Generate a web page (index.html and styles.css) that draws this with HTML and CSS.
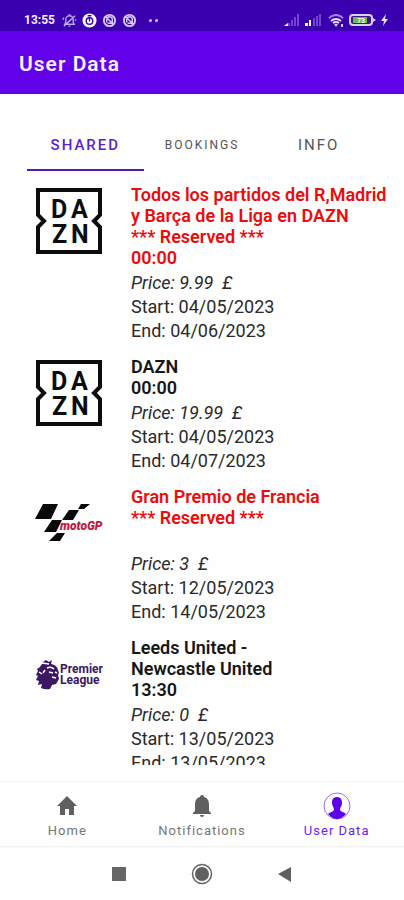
FILE: index.html
```html
<!DOCTYPE html>
<html lang="en">
<head>
<meta charset="utf-8">
<meta name="viewport" content="width=device-width, initial-scale=1">
<title>User Data</title>
<link rel="stylesheet" href="styles.css">
</head>
<body>
<svg class="defs" aria-hidden="true">
  <symbol id="dazn" viewBox="0 0 68 68">
    <path d="M3 3H65V28L59 34L65 40V65H3V40L9 34L3 28Z" fill="none" stroke="#0c0c0c" stroke-width="4"/>
    <g class="dazn-text"><text x="16" y="31">D</text><text x="36" y="31">A</text><text x="17" y="56">Z</text><text x="36" y="56">N</text></g>
  </symbol>
  <symbol id="muted" viewBox="0 0 16 16">
    <circle cx="8" cy="8" r="6" fill="none" stroke="#d5c9f5" stroke-width="2"/>
    <path d="M5 10V7a3 3 0 0 1 6 0v4H6M4 4l8 8" fill="none" stroke="#d5c9f5" stroke-width="1.5"/>
  </symbol>
</svg>
<div class="status">
  <span class="clock">13:55</span>
  <svg class="status-icon" viewBox="0 0 16 16"><path d="M3 12h10l-1-2V7a4 4 0 0 0-8 0v3zM7 14h2M8 1v2M2 14L14 3M2 5l-1 2M14 7l1 1" fill="none" stroke="#b9a8ec" stroke-width="1.5"/></svg>
  <svg class="status-icon" viewBox="0 0 16 16"><circle cx="8" cy="8" r="7.5" fill="#fff"/><circle cx="8" cy="8.500" r="3.500" fill="none" stroke="#3a00b0" stroke-width="1.500"/><path d="M8 9V5M6 3h4" stroke="#3a00b0" stroke-width="1.500"/></svg>
  <svg class="status-icon"><use href="#muted"/></svg>
  <svg class="status-icon"><use href="#muted"/></svg>
  <span class="dots"><i></i><i></i></span>
  <span class="signals">
    <svg width="16" height="12" viewBox="0 0 16 12"><path d="M5 9v3M8 6v6M11 3v9M14 0v12" stroke="#6e48cc" stroke-width="2"/><path d="M0 12l4-3v3z" fill="#fff"/></svg>
    <svg width="16" height="12" viewBox="0 0 16 12"><path d="M9 4v8M12 2v10M15 0v12" stroke="#6e48cc" stroke-width="2"/><path d="M0 12V9h3v3zM4 12V6h2v6z" fill="#fff"/></svg>
  </span>
  <svg class="wifi" viewBox="0 0 16 13"><path d="M1 4q7-6 14 0" fill="none" stroke="#9d86e2" stroke-width="2"/><path d="M3 7q5-4 10 0M5 9q3-2 6 0" fill="none" stroke="#e5def8" stroke-width="2"/><path d="M6 10h4l-2 3zM13 10h2v3h-2z" fill="#d5c9f5"/></svg>
  <svg class="battery" viewBox="0 0 27 12"><rect x="1" y="1" width="22" height="10" rx="3" fill="#3d168c" stroke="#d8d0f0" stroke-width="2"/><path d="M24 4l3 2-3 2z" fill="#d8d0f0"/><rect x="4" y="3" width="14" height="6" fill="#62bd49"/><text x="8" y="9">73</text></svg>
  <svg class="bolt" viewBox="0 0 7 12"><path d="M5 0L0 7h3L2 12l5-7H4z" fill="#e5def8"/></svg>
</div>
<header class="appbar"><h1>User Data</h1></header>
<div class="tabs" role="tablist">
  <button class="tab tab-active" role="tab" aria-selected="true">SHARED</button>
  <button class="tab tab-small" role="tab" aria-selected="false">BOOKINGS</button>
  <button class="tab" role="tab" aria-selected="false">INFO</button>
</div>
<main class="list">
  <article class="item">
    <svg class="logo" role="img" aria-label="DAZN"><use href="#dazn"/></svg>
    <div class="info">
      <h2 class="title reserved">Todos los partidos del R,Madrid<br>y Barça de la Liga en DAZN<br>*** Reserved ***<br>00:00</h2>
      <p class="price">Price: 9.99&nbsp; £</p><p>Start: 04/05/2023</p><p>End: 04/06/2023</p>
    </div>
  </article>
  <article class="item">
    <svg class="logo" role="img" aria-label="DAZN"><use href="#dazn"/></svg>
    <div class="info">
      <h2 class="title">DAZN<br>00:00</h2>
      <p class="price">Price: 19.99&nbsp; £</p><p>Start: 04/05/2023</p><p>End: 04/07/2023</p>
    </div>
  </article>
  <article class="item">
    <svg class="logo" viewBox="0 0 68 68" role="img" aria-label="MotoGP">
      <path d="M8 15H23L16 30H0ZM34 21H44L38 31H27ZM46 15H55L49 20H43ZM17 31H27L21 43H9ZM22 44H30L25 52H14Z" fill="#090909"/>
      <text class="moto-text" x="25" y="41">motoGP</text>
    </svg>
    <div class="info">
      <h2 class="title reserved">Gran Premio de Francia<br>*** Reserved ***<br>&nbsp;</h2>
      <p class="price">Price: 3&nbsp; £</p><p>Start: 12/05/2023</p><p>End: 14/05/2023</p>
    </div>
  </article>
  <article class="item">
    <svg class="logo" viewBox="0 0 68 68" role="img" aria-label="Premier League">
      <path d="M5 20l3 2 3-2 3 2 3-2-1 4q6 1 7 6l1 3-1 2 1 4-3 5-4 1-2 4q-5 1-9-1l1-4-4 1 1-4-3-1 2-4-2-1 2-4-1-2 3-2q1-3 4-4z" fill="#3c1762"/>
      <path d="M7 23l7 1M12 28q4-2 7 1M14 32l4 1M20 32l2 1M17 37l4 1M4 32l3 2M10 30l-2 3" fill="none" stroke="#fff" stroke-width="1.500"/>
      <g class="premier-text"><text x="25" y="33">Premier</text><text x="25" y="44">League</text></g>
    </svg>
    <div class="info">
      <h2 class="title">Leeds United -<br>Newcastle United<br>13:30</h2>
      <p class="price">Price: 0&nbsp; £</p><p>Start: 13/05/2023</p><p>End: 13/05/2023</p>
    </div>
  </article>
</main>
<nav class="bottom">
  <a class="dest" href="#home"><svg viewBox="0 0 28 28"><path d="M14 4L4 14h3v9h5v-6h4v6h5v-9h3z" fill="#5f5f5f"/></svg>Home</a>
  <a class="dest" href="#notifications"><svg viewBox="0 0 28 28"><path d="M14 3a2 2 0 0 0-2 2c-4 1-5 4-5 8v6l-2 2v1h18v-1l-2-2v-6c0-4-1-7-5-8a2 2 0 0 0-2-2zM12 23h4q0 2-2 2t-2-2z" fill="#5f5f5f"/></svg>Notifications</a>
  <a class="dest dest-active" href="#user"><svg viewBox="0 0 28 28"><circle cx="14" cy="14" r="13" fill="none" stroke="#9a70e8"/><path d="M14 5c-4 0-5 3-5 6 0 3 2 4 2 7-1 2-4 2-6 4q9 10 18 0c-2-2-5-2-6-4 0-3 2-4 2-7 0-3-1-6-5-6z" fill="#5b00e8"/></svg>User Data</a>
</nav>
<footer class="system">
  <button aria-label="Recent apps"><svg viewBox="0 0 22 22"><rect x="4" y="4" width="14" height="14" fill="#666"/></svg></button>
  <button aria-label="Home screen"><svg viewBox="0 0 22 22"><circle cx="11" cy="11" r="9.500" fill="none" stroke="#666" stroke-width="1.500"/><circle cx="11" cy="11" r="7" fill="#606060"/></svg></button>
  <button aria-label="Back"><svg viewBox="0 0 22 22"><path d="M17 4v15L4 11z" fill="#606060"/></svg></button>
</footer>
</body>
</html>
```
FILE: styles.css
```css
* { box-sizing: border-box; }
body {
  margin: 0;
  height: 100vh;
  display: flex;
  flex-direction: column;
  background: #fefefe;
  color: #161616;
  font-family: Roboto, sans-serif;
}
h1, h2, p { margin: 0; }
button { border: 0; padding: 0; background: none; font: inherit; }
svg { display: block; flex: none; }
.defs { display: none; }

.status {
  flex: none;
  height: 31px;
  padding: 9px 16px 0 24px;
  display: flex;
  align-items: center;
  gap: 5px;
  background: #3a00b0;
  color: #f0ebff;
}
.clock { font-size: 12px; font-weight: 700; margin-right: 2px; }
.status-icon { width: 15px; height: 15px; }
.dots { display: flex; gap: 3px; margin-left: 7px; }
.dots i { width: 3px; height: 3px; border-radius: 50%; background: #d5c9f5; }
.signals { display: flex; gap: 5px; margin-left: auto; margin-right: 2px; }
.wifi { width: 16px; height: 13px; }
.battery { width: 27px; height: 12px; }
.battery text { font-size: 7px; font-weight: 700; fill: #fff; }
.bolt { width: 7px; height: 12px; }

.appbar {
  flex: none;
  height: 63px;
  padding: 2px 19px 0;
  display: flex;
  align-items: center;
  background: #6200ea;
  color: #f6f0ff;
}
.appbar h1 { font-size: 21px; font-weight: 600; line-height: 28px; letter-spacing: 1px; }

.tabs {
  flex: none;
  display: grid;
  grid-template-columns: repeat(3, 1fr);
  margin: 24px 27px 0;
}
.tab {
  height: 53px;
  padding: 2px 0 0;
  border-bottom: 2px solid transparent;
  color: #555;
  font-size: 15px;
  letter-spacing: 2px;
}
.tab-small { font-size: 12px; }
.tab-active { color: #5a1fd0; border-color: #4d1cb8; font-weight: 500; }

.list {
  flex: 1;
  min-height: 0;
  overflow: hidden;
  margin: 0 18px 16px 35px;
  padding-top: 13px;
}
.item { display: flex; gap: 28px; margin-bottom: 13px; }
.logo { width: 68px; height: 68px; margin-top: 3px; }
.info { flex: 1; min-width: 0; color: #2a2a2a; font-size: 18px; line-height: 24px; white-space: nowrap; }
.title { margin-bottom: 3px; color: #161616; font-size: 18px; font-weight: 600; line-height: 21px; }
.reserved { color: #ea0c0c; }
.price { font-style: italic; }
.dazn-text { font-size: 25px; font-weight: 700; fill: #0c0c0c; }
.moto-text { font-size: 12px; font-weight: 900; font-style: italic; fill: #c51745; }
.premier-text { font-size: 12px; font-weight: 700; fill: #3c1762; }

.bottom {
  flex: none;
  height: 66px;
  display: grid;
  grid-template-columns: repeat(3, 1fr);
  border-top: 1px solid #f7f7f7;
  border-bottom: 1px solid #f2f2f2;
}
.dest {
  display: flex;
  flex-direction: column;
  align-items: center;
  padding-top: 10px;
  gap: 3px;
  color: #777;
  font-size: 13px;
  line-height: 16px;
  letter-spacing: 1px;
  text-decoration: none;
}
.dest svg { width: 28px; height: 28px; }
.dest-active { color: #6a1fe8; }
.system {
  flex: none;
  height: 53px;
  display: flex;
  justify-content: center;
  align-items: center;
  gap: 61px;
}
.system svg { width: 22px; height: 22px; }
```
